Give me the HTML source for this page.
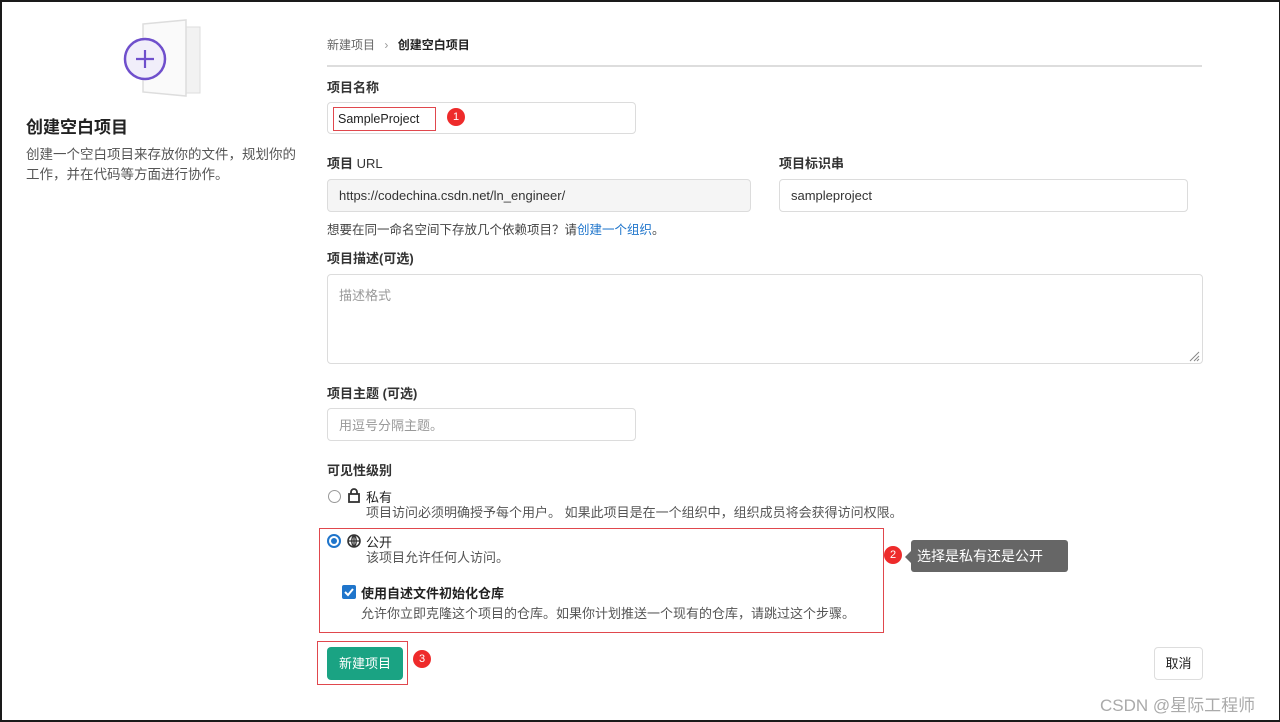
<!DOCTYPE html>
<html><head><meta charset="utf-8"><style>
*{box-sizing:border-box;margin:0;padding:0}
html,body{width:1280px;height:722px;overflow:hidden;background:#fff}
body{position:relative;font-family:"Liberation Sans","Noto Sans CJK SC",sans-serif;color:#333;font-size:13px}
.a{position:absolute;white-space:nowrap}
.frame{position:absolute;left:0;top:0;width:1280px;height:722px;border:2px solid #1a1a1a;border-right-width:1px}
.inp{position:absolute;border:1px solid #dcdcdc;border-radius:4px;background:#fff;font-size:13px;padding-left:11px;display:flex;align-items:center}
.lbl{font-weight:bold;font-size:13px;color:#333}
.badge{position:absolute;width:18px;height:18px;border-radius:9px;background:#ee2b2b;color:#fff;font-size:11px;text-align:center;line-height:18px}
.red{position:absolute;border:1px solid #e0474d}
.sub{color:#555;font-size:13px}
</style></head><body>
<div class="frame"></div>
<svg class="a" style="left:120px;top:18px" width="84" height="80" viewBox="0 0 84 80">
<rect x="48" y="9" width="32" height="66" fill="#f2f2f2" stroke="#ddd"/>
<path d="M23 6 L66 2 L66 78 L23 74 Z" fill="#fafafa" stroke="#ddd" stroke-width="1.5"/>
<circle cx="25" cy="41" r="20" fill="#f1eefa" stroke="#6f4fcc" stroke-width="2.5"/>
<path d="M25 32v18M16 41h18" stroke="#6f4fcc" stroke-width="2.2"/>
</svg>
<div class="a" style="left:26px;top:113px;font-size:17px;font-weight:bold;color:#222">创建空白项目</div>
<div class="a sub" style="left:26px;top:145px;line-height:20px;font-size:13.5px">创建一个空白项目来存放你的文件，规划你的<br>工作，并在代码等方面进行协作。</div>

<div class="a" style="left:327px;top:36px;font-size:12px;color:#666">新建项目 <span style="margin:0 6px;color:#999">›</span> <b style="color:#222">创建空白项目</b></div>
<div class="a" style="left:327px;top:65px;width:875px;height:2px;background:#ddd"></div>

<div class="a lbl" style="left:327px;top:77px">项目名称</div>
<div class="inp" style="left:327px;top:102px;width:309px;height:32px"></div>
<div class="red" style="left:333px;top:107px;width:103px;height:24px"></div>
<div class="a" style="left:338px;top:112px;font-size:12.5px;color:#222">SampleProject</div>
<div class="badge" style="left:447px;top:108px">1</div>

<div class="a lbl" style="left:327px;top:153px;font-weight:normal;color:#333"><b>项目</b> URL</div>
<div class="inp" style="left:327px;top:179px;width:424px;height:33px;background:#f5f5f5;color:#333">https://codechina.csdn.net/ln_engineer/</div>
<div class="a lbl" style="left:779px;top:153px">项目标识串</div>
<div class="inp" style="left:779px;top:179px;width:409px;height:33px;color:#333">sampleproject</div>
<div class="a" style="left:327px;top:219px;font-size:12.5px;color:#444">想要在同一命名空间下存放几个依赖项目？请<span style="color:#1f75cb">创建一个组织</span>。</div>

<div class="a lbl" style="left:327px;top:248px">项目描述(可选)</div>
<div class="inp" style="left:327px;top:274px;width:876px;height:90px;align-items:flex-start;padding-top:10px;color:#999">描述格式</div>
<svg class="a" style="left:1188px;top:350px" width="12" height="12"><path d="M2 11L11 2M6 11L11 6M9 11L11 9" stroke="#888"/></svg>

<div class="a lbl" style="left:327px;top:383px">项目主题 (可选)</div>
<div class="inp" style="left:327px;top:408px;width:309px;height:33px;color:#999">用逗号分隔主题。</div>

<div class="a lbl" style="left:327px;top:460px">可见性级别</div>
<div class="a" style="left:328px;top:490px;width:13px;height:13px;border:1px solid #999;border-radius:50%"></div>
<svg class="a" style="left:347px;top:487px" width="14" height="16" viewBox="0 0 14 16"><path d="M4 7V5a3 3 0 0 1 6 0v2" fill="none" stroke="#333" stroke-width="1.8"/><rect x="2" y="7" width="10" height="8" fill="none" stroke="#333" stroke-width="1.8"/></svg>
<div class="a" style="left:366px;top:487px;font-size:13px;color:#222">私有</div>
<div class="a sub" style="left:366px;top:502px">项目访问必须明确授予每个用户。 如果此项目是在一个组织中，组织成员将会获得访问权限。</div>

<div class="red" style="left:319px;top:528px;width:565px;height:105px"></div>
<div class="a" style="left:327px;top:534px;width:14px;height:14px;border:2px solid #1f75cb;border-radius:50%;background:#fff"></div>
<div class="a" style="left:331px;top:538px;width:6px;height:6px;border-radius:50%;background:#1f75cb"></div>
<svg class="a" style="left:347px;top:534px" width="14" height="14" viewBox="0 0 14 14"><circle cx="7" cy="7" r="6" fill="none" stroke="#333" stroke-width="1.6"/><path d="M1 7h12M7 1v12M7 1c-3 3-3 9 0 12M7 1c3 3 3 9 0 12" fill="none" stroke="#333" stroke-width="1.3"/></svg>
<div class="a" style="left:366px;top:532px;font-size:13px;color:#222">公开</div>
<div class="a sub" style="left:366px;top:547px">该项目允许任何人访问。</div>
<div class="a" style="left:342px;top:585px;width:14px;height:14px;background:#1f75cb;border-radius:2px"></div>
<svg class="a" style="left:342px;top:585px" width="14" height="14"><path d="M3 7l3 3 5-6" fill="none" stroke="#fff" stroke-width="2"/></svg>
<div class="a" style="left:361px;top:583px;font-weight:bold;font-size:13px;color:#222">使用自述文件初始化仓库</div>
<div class="a sub" style="left:361px;top:603px">允许你立即克隆这个项目的仓库。如果你计划推送一个现有的仓库，请跳过这个步骤。</div>

<div class="badge" style="left:884px;top:546px">2</div>
<div class="a" style="left:911px;top:540px;width:157px;height:32px;background:#666;border-radius:3px;color:#fff;font-size:14px;line-height:32px;padding-left:6px">选择是私有还是公开</div>
<div class="a" style="left:905px;top:551px;width:0;height:0;border:6px solid transparent;border-left:0;border-right-color:#666"></div>

<div class="red" style="left:317px;top:641px;width:91px;height:44px"></div>
<div class="a" style="left:327px;top:647px;width:76px;height:33px;background:#1aa383;border-radius:4px;color:#fff;font-size:13px;text-align:center;line-height:33px">新建项目</div>
<div class="badge" style="left:413px;top:650px">3</div>

<div class="a" style="left:1154px;top:647px;width:49px;height:33px;border:1px solid #ddd;border-radius:4px;text-align:center;line-height:31px;font-size:13px;color:#222">取消</div>
<div class="a" style="left:1100px;top:691px;font-size:17px;color:#aaa">CSDN @星际工程师</div>
</body></html>
